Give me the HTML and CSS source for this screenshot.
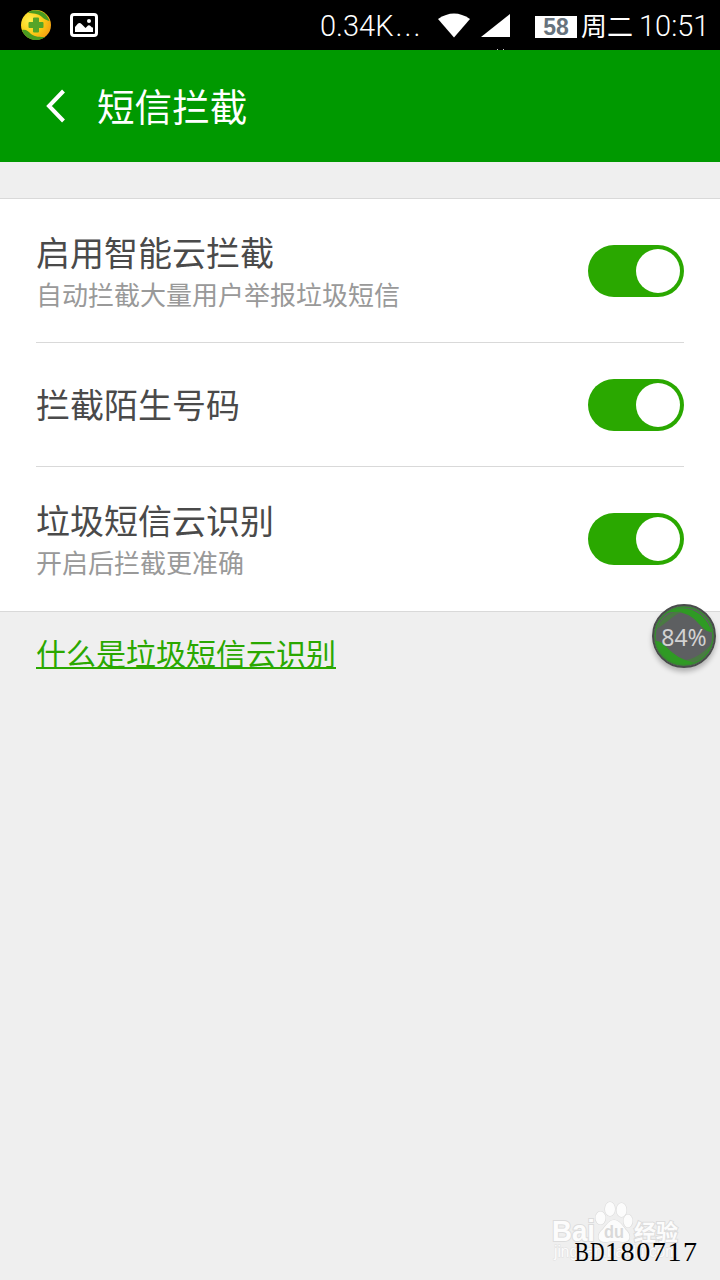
FILE: index.html
```html
<!DOCTYPE html>
<html lang="zh-CN">
<head>
  <meta charset="UTF-8" />
  <meta name="viewport" content="width=device-width, initial-scale=1.0"/>
  <title>短信拦截</title>
  <link rel="stylesheet" href="styles.css">
</head>
<body>

  <div class="statusbar">
    <svg class="shield" width="32" height="32" viewBox="0 0 32 32">
      <defs>
        <radialGradient id="gold" cx="30%" cy="35%" r="75%">
          <stop offset="0" stop-color="#fff04a"/>
          <stop offset="0.6" stop-color="#fbc915"/>
          <stop offset="1" stop-color="#f5a011"/>
        </radialGradient>
      </defs>
      <circle cx="16" cy="16" r="15" fill="url(#gold)"/>
      <path d="M8 3.500C14-1 26 1 29.500 12C27 11 25 11 22 8C18 4 13 5 8 3.500Z" fill="#4a9a20"/>
      <path d="M2 21C6 20 8 22 11 25C15 28 20 28 25 28C18 34 5 31 2 21Z" fill="#4a9a20"/>
      <path d="M14 9.500h4v4.500h4.500v4H18v4.500h-4V18H9.500v-4H14z" fill="#56a428" stroke="#56a428" stroke-width="2" stroke-linejoin="round"/>
    </svg>
    <svg class="picture" width="28" height="24" viewBox="0 0 28 24">
      <rect x="1.500" y="1.500" width="25" height="21" rx="2.500" fill="none" stroke="#fff" stroke-width="3"/>
      <path d="M5 19v-5l3-3.500q2-1 3.500.5l4 4 2.500-2.500q1.500-.5 2.500.5l1.500 1.500h1V19z" fill="#fff"/>
      <circle cx="19" cy="8" r="2" fill="#fff"/>
    </svg>
    <span class="speed">0.34K<i>...</i></span>
    <svg class="wifi" width="32" height="25" viewBox="0 0 32 25">
      <path d="M0 6Q16-5 32 6L16 24.500Z" fill="#fff"/>
    </svg>
    <svg class="signal" width="29" height="23" viewBox="0 0 29 23">
      <path d="M0 23L29 0V23Z" fill="#fff"/>
    </svg>
    <span class="battery">58</span>
    <span class="day">周二</span>
    <span class="time">10:51</span>
    <svg class="specks" width="8" height="2" viewBox="0 0 8 2">
      <path d="M0 1h1v1H0zM6 1h1v1H6z" fill="#ccc"/>
    </svg>
  </div>

  <div class="header">
    <svg width="20" height="34" viewBox="0 0 20 34">
      <path d="M17.500 2L3 17L17.500 32" fill="none" stroke="#fff" stroke-width="4"/>
    </svg>
    <h1>短信拦截</h1>
  </div>

  <div class="list">
    <div class="row">
      <div class="label">
        <h2>启用智能云拦截</h2>
        <p>自动拦截大量用户举报垃圾短信</p>
      </div>
      <div class="switch"></div>
    </div>
    <div class="row short">
      <div class="label">
        <h2>拦截陌生号码</h2>
      </div>
      <div class="switch"></div>
    </div>
    <div class="row">
      <div class="label">
        <h2>垃圾短信云识别</h2>
        <p>开启后拦截更准确</p>
      </div>
      <div class="switch"></div>
    </div>
  </div>

  <a class="help">什么是垃圾短信云识别</a>

  <!-- floating memory ball -->
  <div class="ball">
    <svg width="64" height="64" viewBox="0 0 64 64">
      <circle cx="32" cy="32" r="30.500" fill="#5d5f61"/>
      <path d="M14 9C25 0 52 2 60 28C52 28 48 20 41 14C33 8 24 7 14 9Z" fill="#2f9a24"/>
      <path d="M3 37C9 36 14 43 21 49C30 56 36 58 48 56C34 67 6 61 3 37Z" fill="#2f9a24"/>
      <path d="M5 25C9 14 18 6 31 8C24 9 18 16 5 25ZM34 56C46 54 54 46 61 38C58 48 52 56 42 59Z" fill="#4a7a43"/>
      <circle cx="32" cy="32" r="29" fill="none" stroke="#368d2e" stroke-width="1.500"/>
      <circle cx="32" cy="32" r="31" fill="none" stroke="#484c4a" stroke-width="2"/>
    </svg>
    <span>84%</span>
  </div>

  <div class="watermark">
    <svg width="150" height="80" viewBox="0 0 150 80">
      <g class="logo">
        <ellipse cx="49.500" cy="18" rx="5" ry="6.500"/>
        <ellipse cx="59" cy="9" rx="5" ry="7"/>
        <ellipse cx="70.500" cy="10" rx="5" ry="7"/>
        <ellipse cx="77" cy="21" rx="4.500" ry="6.500"/>
        <path d="M63 20C69 20 72 27 76 31C81 37 78 43 71 42Q63 40 56 42C48 43 45 37 50 31C55 27 57 20 63 20Z"/>
        <text class="bai" x="1" y="41" textLength="43" lengthAdjust="spacingAndGlyphs">Bai</text>
        <text class="jingyan" x="83" y="40">经验</text>
      </g>
      <text class="du" x="53" y="38" textLength="20" lengthAdjust="spacingAndGlyphs">du</text>
      <text class="site" x="3" y="57" textLength="124" lengthAdjust="spacingAndGlyphs">jingyan.baidu.com</text>
      <g class="stamp">
        <text x="23.500" y="60.500" textLength="14.500" lengthAdjust="spacingAndGlyphs">B</text>
        <text x="39" y="60.500" textLength="14.500" lengthAdjust="spacingAndGlyphs">D</text>
        <text x="54" y="60.500" textLength="92" lengthAdjust="spacing">180717</text>
      </g>
    </svg>
  </div>

</body>
</html>
```
FILE: styles.css
```css
body {
  margin: 0;
  height: 1280px;
  position: relative;
  overflow: hidden;
  background-color: #efefef;
  font-family: "Noto Sans CJK SC", sans-serif;
}

h1, h2, p {
  margin: 0;
  font-weight: normal;
}

svg {
  display: block;
  flex: none;
}

.statusbar {
  position: relative;
  display: flex;
  align-items: center;
  height: 50px;
  background-color: black;
  color: white;
  font-family: Roboto, "Noto Sans CJK SC", sans-serif;
  font-weight: 300;
  font-size: 29px;
  line-height: 50px;
  white-space: nowrap;
}

.shield {
  margin-left: 20px;
}

.picture {
  margin-left: 18px;
}

.speed {
  width: 118px;
  margin-left: 222px;
  padding-top: 2px;
}

.speed i {
  font-style: normal;
  letter-spacing: 2px;
  margin-left: 2px;
}

.signal {
  margin-left: 11px;
}

.battery {
  width: 42px;
  height: 22px;
  margin: 3px 0 0 25px;
  background-color: white;
  color: #66727c;
  font-family: "Liberation Sans", sans-serif;
  font-weight: bold;
  font-size: 23px;
  line-height: 23px;
  text-align: center;
}

.day {
  margin-left: 4px;
  font-size: 26px;
  font-weight: normal;
  font-family: "Noto Sans CJK SC", sans-serif;
}

.time {
  margin-left: 6px;
  padding-top: 2px;
}

.specks {
  position: absolute;
  left: 497px;
  bottom: 0;
}

.header {
  display: flex;
  align-items: center;
  gap: 31px;
  height: 112px;
  padding-left: 46px;
  background-color: #009900;
  color: white;
}

.header h1 {
  font-size: 37.6px;
  line-height: 56px;
  padding-bottom: 2px;
}

.list {
  margin-top: 36px;
  padding: 0 36px;
  background-color: white;
  border-top: 1px solid #d9d9d9;
  border-bottom: 1px solid #d9d9d9;
}

.row {
  display: flex;
  align-items: center;
  justify-content: space-between;
  height: 143px;
  border-bottom: 1px solid #d9d9d9;
}

.row.short {
  height: 123px;
}

.row:last-child {
  height: 144px;
  border-bottom: none;
}

.label {
  padding-bottom: 2px;
}

.label h2 {
  color: #4a4a4a;
  font-size: 34px;
  line-height: 48px;
}

.label p {
  color: #999;
  font-size: 26px;
  line-height: 36px;
}

.switch {
  display: flex;
  justify-content: flex-end;
  box-sizing: border-box;
  width: 96px;
  height: 52px;
  padding: 4px;
  border-radius: 26px;
  background-color: #2aa800;
}

.switch::after {
  content: "";
  width: 44px;
  height: 44px;
  border-radius: 50%;
  background-color: white;
}

.help {
  display: inline-block;
  margin: 16px 0 0 36px;
  color: #2aa800;
  font-size: 30px;
  line-height: 48px;
  text-decoration: underline;
  text-decoration-thickness: 2px;
  text-underline-offset: 2px;
  text-decoration-skip-ink: none;
}

.ball {
  position: absolute;
  left: 652px;
  top: 604px;
  width: 64px;
  height: 64px;
  border-radius: 50%;
  box-shadow: 0 4px 5px rgba(0, 0, 0, 0.25);
}

.ball span {
  position: absolute;
  left: 0;
  top: 0;
  width: 64px;
  line-height: 66px;
  text-align: center;
  color: #d2d2d2;
  font-family: "Noto Sans", sans-serif;
  font-size: 23px;
}

.watermark {
  position: absolute;
  left: 551px;
  top: 1200px;
}

.logo {
  fill: #fcfcfc;
  stroke: #dcdcdc;
  stroke-width: 1.2px;
  paint-order: stroke;
}

.bai {
  font-family: "Liberation Sans", sans-serif;
  font-weight: bold;
  font-size: 29px;
  stroke-width: 2px;
}

.jingyan {
  font-family: "Noto Sans CJK SC", sans-serif;
  font-weight: bold;
  font-size: 22px;
  stroke-width: 2px;
}

.du {
  fill: #d9d9d9;
  font-family: "Liberation Sans", sans-serif;
  font-weight: bold;
  font-size: 19px;
}

.site {
  fill: #fcfcfc;
  stroke: #e0e0e0;
  stroke-width: 1px;
  paint-order: stroke;
  font-family: "Liberation Sans", sans-serif;
  font-size: 16px;
}

.stamp {
  fill: black;
  font-family: "Liberation Serif", serif;
  font-size: 28px;
}
```
